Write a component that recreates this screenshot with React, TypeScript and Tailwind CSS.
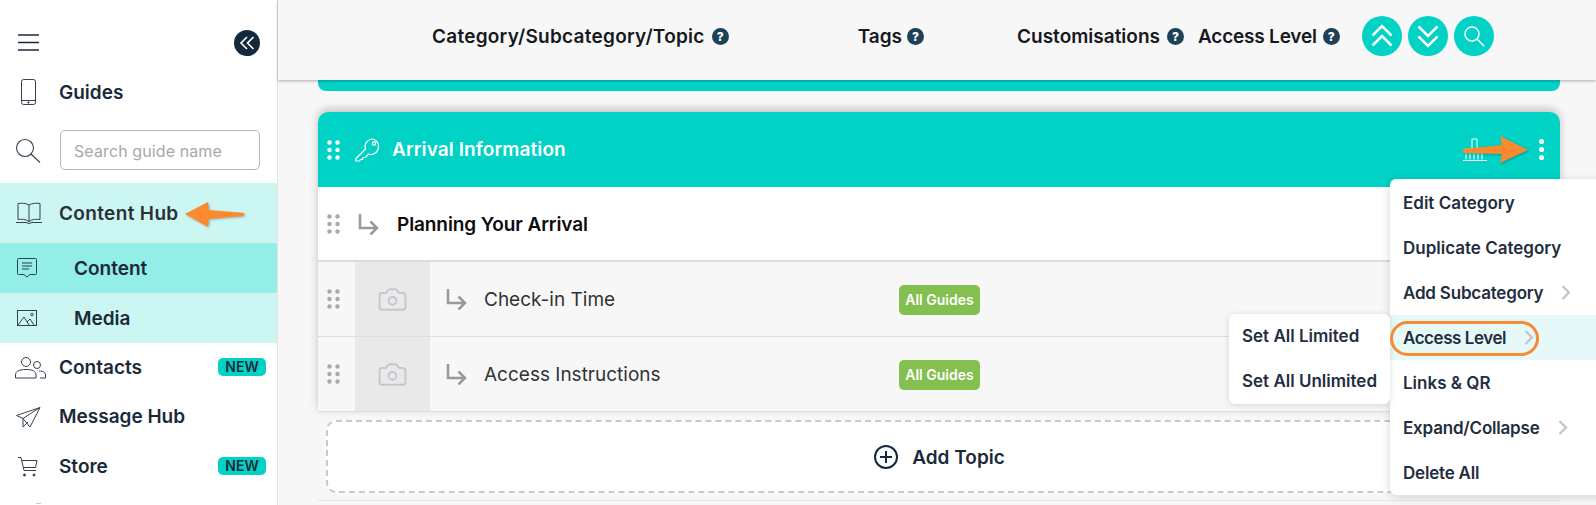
import { Camera } from 'lucide-react';

function Dots({ className }: { className: string }) {
  return (
    <svg width="13" height="20" viewBox="0 0 13 20" className={className} fill="currentColor">
      <circle cx="2.5" cy="2.5" r="2.2" />
      <circle cx="10.5" cy="2.5" r="2.2" />
      <circle cx="2.5" cy="10" r="2.2" />
      <circle cx="10.5" cy="10" r="2.2" />
      <circle cx="2.5" cy="17.5" r="2.2" />
      <circle cx="10.5" cy="17.5" r="2.2" />
    </svg>
  );
}

function Elbow({ className }: { className: string }) {
  return (
    <svg width="21" height="22" viewBox="0 0 21 22" fill="none" stroke="#999" strokeWidth="2.5" className={className}>
      <path d="M2 1v14h17M12.500 8.500 19 15l-6.500 6.500" />
    </svg>
  );
}

function Help() {
  return (
    <span className="block w-[17px] h-[17px] rounded-full bg-[#1d4258] text-white text-[12px] leading-[17px] font-extrabold text-center shrink-0">
      ?
    </span>
  );
}

function RoundBtn({ children }: { children: React.ReactNode }) {
  return <button className="w-10 h-10 rounded-full bg-[#00d2c6] flex items-center justify-center text-white">{children}</button>;
}

function NavRow({ icon, label, badge }: { icon: React.ReactNode; label: string; badge?: boolean }) {
  return (
    <div className="h-[49.500px] flex items-center relative text-[19px] font-semibold text-[#1b2a3a] shrink-0">
      <div className="w-[59px] pl-[15px] flex items-center shrink-0">{icon}</div>
      <span>{label}</span>
      {badge && (
        <span className="ml-auto mr-[11px] mb-[1px] w-[48px] h-[18px] rounded-[5px] bg-[#00d2c6] text-[14px] leading-[18px] text-center font-semibold text-[#1b2a3a]">
          NEW
        </span>
      )}
    </div>
  );
}

function Topic({ name }: { name: string }) {
  return (
    <div className="h-[75px] flex items-stretch bg-[#f7f7f7] border-b border-[#dedede]">
      <div className="w-[37px] flex items-center pl-[9px] shrink-0">
        <Dots className="text-[#a9a9a9]" />
      </div>
      <div className="w-[75px] bg-[#e9e9e9] flex items-center justify-center shrink-0">
        <Camera size={31} strokeWidth={1.5} className="text-[#c3c8d0]" />
      </div>
      <div className="w-[54px] pl-[16px] flex items-center shrink-0">
        <Elbow className="" />
      </div>
      <div className="w-[415px] pt-[2px] flex items-center text-[19px] text-[#333333] shrink-0">{name}</div>
      <div className="pt-[2px] flex items-center">
        <span className="w-[81px] h-[30px] rounded-[5px] bg-[#84c04f] text-white text-[14px] leading-[30px] text-center font-semibold">
          All Guides
        </span>
      </div>
    </div>
  );
}

function MenuRow({ label, chevron, active, tight }: { label: string; chevron?: number; active?: boolean; tight?: string }) {
  return (
    <div className={`h-[45px] flex items-center pl-[13px] text-[17px] font-semibold text-[#1f2e40] ${active ? 'bg-[#e6f8f7]' : ''}`}>
      <span className={`pt-[2px] ${tight ?? ''}`}>{label}</span>
      {chevron !== undefined && (
        <svg width="10" height="15" viewBox="0 0 10 15" fill="none" stroke="#c4c4c4" strokeWidth="2.2" style={{ marginLeft: chevron }}>
          <path d="M1.500 1 8 7.500 1.500 14" />
        </svg>
      )}
    </div>
  );
}

export default function App() {
  return (
    <div className="relative flex w-full h-[505px] overflow-hidden bg-[#f7f7f7] font-['Inter',sans-serif]">
      {/* Sidebar */}
      <aside className="w-[278px] shrink-0 bg-white border-r border-[#e3e3e3] flex flex-col">
        <div className="h-[68px] pt-[30px] pl-[18px] pr-[17px] flex justify-between items-start shrink-0">
          <svg width="21" height="20" viewBox="0 0 21 20" stroke="#1b2a3a" strokeWidth="1.400" className="mt-[3px]">
            <path d="M0 2h21M0 9.500h21M0 17h21" />
          </svg>
          <div className="w-[26px] h-[26px] rounded-full bg-[#14293b] flex items-center justify-center">
            <svg width="16" height="14" viewBox="0 0 16 14" fill="none" stroke="#fff" strokeWidth="1.600">
              <path d="M8 1 2 7l6 6M14.500 1l-6 6 6 6" />
            </svg>
          </div>
        </div>
        <div className="h-[48px] flex items-center text-[19px] font-semibold text-[#1b2a3a] shrink-0">
          <div className="w-[59px] pl-[21px]">
            <svg width="15" height="26" viewBox="0 0 15 26" fill="none" stroke="#33414f" strokeWidth="1">
              <rect x="0.500" y="0.500" width="14" height="25" rx="2" />
              <path d="M0.500 21.500h14" />
              <circle cx="7.500" cy="23.500" r="0.700" fill="#33414f" />
            </svg>
          </div>
          <span className="pt-[2px]">Guides</span>
        </div>
        <div className="h-[67px] flex items-start pt-[14px] shrink-0">
          <div className="w-[60px] pl-[15px] pt-[8px]">
            <svg width="26" height="25" viewBox="0 0 26 25" fill="none" stroke="#33414f" strokeWidth="1.100">
              <circle cx="10" cy="10" r="8.500" />
              <path d="m16 16 9 8.500" />
            </svg>
          </div>
          <div className="w-[200px] h-[40px] rounded-[5px] border border-[#b5b5b5] pl-[13px] pt-[1px] flex items-center text-[16px] tracking-[0.1px] text-[#a8a8a8]">
            Search guide name
          </div>
        </div>
        <div className="h-[60px] bg-[#ccf6f2] flex items-center text-[19px] tracking-[0.35px] font-semibold text-[#2b2f36] shrink-0">
          <div className="w-[59px] pl-[16px]">
            <svg width="26" height="22" viewBox="0 0 26 22" fill="none" stroke="#33414f" strokeWidth="1">
              <path d="M13 20V3C10 1 5 1 2 1.500v16c3-.5 8-.5 11 2 3-2.500 8-2.500 11-2v-16C21 1 16 1 13 3M0 20.500h10l3 1 3-1h10" />
            </svg>
          </div>
          <span className="pt-[2px]">Content Hub</span>
        </div>
        <div className="h-[50px] bg-[#92eee6] flex items-center text-[19px] font-semibold text-[#1b2a3a] shrink-0">
          <div className="w-[74px] pl-[17px]">
            <svg width="20" height="20" viewBox="0 0 20 20" fill="none" stroke="#33414f" strokeWidth="1">
              <path d="M1.500.500h17a1 1 0 0 1 1 1v14a1 1 0 0 1-1 1H13L10 19l-3-2.500H1.500a1 1 0 0 1-1-1v-14a1 1 0 0 1 1-1zM5 5h10M5 8h10M5 11h7" />
            </svg>
          </div>
          <span className="pt-[2px]">Content</span>
        </div>
        <div className="h-[50px] bg-[#ccf6f2] flex items-center text-[19px] font-semibold text-[#1b2a3a] shrink-0">
          <div className="w-[74px] pl-[17px]">
            <svg width="20" height="16" viewBox="0 0 20 16" fill="none" stroke="#33414f" strokeWidth="1">
              <rect x="0.500" y="0.500" width="19" height="15" />
              <path d="m1 15 6-8 5 8M10 12l3-3 4 6" />
              <circle cx="15" cy="4.500" r="1.300" />
            </svg>
          </div>
          <span className="pt-[2px]">Media</span>
        </div>
        <NavRow
          label="Contacts"
          badge
          icon={
            <svg width="31" height="22" viewBox="0 0 31 22" fill="none" stroke="#33414f" strokeWidth="1">
              <circle cx="11" cy="5" r="4.500" />
              <circle cx="22" cy="8" r="3.500" />
              <path d="M.500 21v-3c0-4 4-5.500 10.500-5.500s10 1.500 10 5.500v3zM24 14c4 0 6.500 1 6.500 4v3H25" />
            </svg>
          }
        />
        <NavRow
          label="Message Hub"
          icon={
            <svg width="25" height="21" viewBox="0 0 25 21" fill="none" stroke="#33414f" strokeWidth="1" className="ml-[1px]">
              <path d="M24 .500.500 8.500l6.500 3L24 .500 14 20l-7-8.500V20l5-5" />
            </svg>
          }
        />
        <NavRow
          label="Store"
          badge
          icon={
            <svg width="20" height="20" viewBox="0 0 20 20" fill="none" stroke="#33414f" strokeWidth="1" className="ml-[3px]">
              <path d="M0 .500h3l3 13h12M4 3.500h15l-1.500 7H5.500" />
              <circle cx="6.500" cy="18" r="1" fill="#33414f" />
              <circle cx="16" cy="18" r="1" fill="#33414f" />
            </svg>
          }
        />
        {/* top of the next item's icon, cut off by the window */}
        <div className="pt-[11px] pl-[36px] shrink-0">
          <div className="w-[5px] h-px bg-[#c9ccd0]" />
        </div>
      </aside>

      {/* Main column */}
      <main className="relative flex-1 min-w-0 flex flex-col">
        <header className="relative z-10 h-[80px] shrink-0 bg-[#f7f7f7] shadow-[0_1px_3px_rgba(0,0,0,0.3)] flex items-center pb-[8px] pl-[154px] text-[19px] font-semibold text-[#15191e]">
          <span className="pt-[2px] tracking-[0.25px]">Category/Subcategory/Topic</span>
          <span className="ml-[7px]"><Help /></span>
          <span className="pt-[2px] ml-[129px]">Tags</span>
          <span className="ml-[5px]"><Help /></span>
          <span className="pt-[2px] ml-[93px]">Customisations</span>
          <span className="ml-[7px]"><Help /></span>
          <span className="pt-[2px] ml-[14px] tracking-[-0.2px]">Access Level</span>
          <span className="ml-[6px]"><Help /></span>
          <div className="ml-[22px] flex gap-[6px]">
            <RoundBtn>
              <svg width="26" height="26" viewBox="0 0 26 26" fill="none" stroke="#fff" strokeWidth="2.500">
                <path d="M3.500 12.500 13 3l9.500 9.500M3.500 22.500 13 13l9.500 9.500" />
              </svg>
            </RoundBtn>
            <RoundBtn>
              <svg width="26" height="26" viewBox="0 0 26 26" fill="none" stroke="#fff" strokeWidth="2.500">
                <path d="M3.500 3.500 13 13l9.500-9.500M3.500 13.500 13 23l9.500-9.500" />
              </svg>
            </RoundBtn>
            <RoundBtn>
              <svg width="24" height="24" viewBox="0 0 24 24" fill="none" stroke="#fff" strokeWidth="1.500">
                <circle cx="10" cy="10" r="7" />
                <path d="m15 15 7 7" />
              </svg>
            </RoundBtn>
          </div>
        </header>

        <div className="pl-[40px] pr-[36px] flex flex-col">
          <div className="h-[11px] bg-[#00d2c6] rounded-b-[8px]" />
          <div className="mt-[21px] rounded-t-[10px] shadow-[0_-3px_8px_rgba(0,0,0,0.22)]">
            <div className="h-[75px] rounded-t-[10px] bg-[#00d2c6] flex items-center pl-[9px] text-white">
              <Dots className="text-white" />
              <svg width="27" height="25" viewBox="0 0 27 25" fill="none" stroke="#fff" strokeWidth="1.200" className="ml-[15px]">
                <path d="M10.500 12 1 21.500V24h3.500l1-1.500h2l.500-2h2.500l3-3.500c5 2 10-2 10-7.500S18 .500 14 3c-4 2.500-4.500 6-3.500 9z" />
                <circle cx="19" cy="6.500" r="1.600" />
              </svg>
              <span className="ml-[10px] pt-[2px] text-[19px] tracking-[0.1px] font-semibold">Arrival Information</span>
              <svg width="24" height="23" viewBox="0 0 24 23" fill="none" stroke="#fff" strokeWidth="1" className="ml-auto mr-[8px]">
                <path d="M9 12V1h5v11M3 21.500V10M7 21.500V10M11 21.500V10M15 21.500V10M19 21.500V10M0 22.500h24" />
              </svg>
              <div className="ml-[44px] mr-[16px] flex flex-col gap-[3px]">
                <span className="w-[5px] h-[5px] rounded-full bg-white" />
                <span className="w-[5px] h-[5px] rounded-full bg-white" />
                <span className="w-[5px] h-[5px] rounded-full bg-white" />
              </div>
            </div>
            <div className="h-[75px] bg-white border-b-2 border-[#dcdcdc] flex items-center pl-[9px]">
              <Dots className="text-[#a9a9a9]" />
              <Elbow className="ml-[18px]" />
              <span className="ml-[18px] pt-[3px] text-[19px] tracking-[-0.1px] font-semibold text-[#0c0c0c]">Planning Your Arrival</span>
            </div>
            <Topic name="Check-in Time" />
            <Topic name="Access Instructions" />
          </div>
          <div className="mt-[8px] ml-[8px] mr-[7px] h-[73px] bg-white rounded-[10px] border-2 border-dashed border-[#c9c9c9] flex items-center justify-center gap-[14px] text-[19px] font-semibold text-[#1b2a3a]">
            <svg width="24" height="24" viewBox="0 0 24 24" fill="none" stroke="#14293b" strokeWidth="2">
              <circle cx="12" cy="12" r="11" />
              <path d="M12 6v12M6 12h12" />
            </svg>
            <span className="pt-[3px]">Add Topic</span>
          </div>
          <div className="mt-[7px] border-t border-[#e4e8ee]" />
        </div>
      </main>

      {/* Context menu */}
      <div className="absolute z-20 left-[1390px] top-[179px] w-[220px] h-[316px] pt-[1px] bg-white rounded-[6px] shadow-[0_2px_10px_rgba(0,0,0,0.16)]">
        <MenuRow label="Edit Category" />
        <MenuRow label="Duplicate Category" />
        <MenuRow label="Add Subcategory" chevron={18} tight="tracking-[-0.2px]" />
        <MenuRow label="Access Level" chevron={18} active tight="tracking-[-0.45px]" />
        <MenuRow label="Links & QR" />
        <MenuRow label="Expand/Collapse" chevron={18} tight="tracking-[-0.2px]" />
        <MenuRow label="Delete All" tight="tracking-[-0.2px]" />
      </div>
      <div className="absolute z-20 left-[1229px] top-[314px] w-[161px] h-[90px] bg-white rounded-[6px] shadow-[0_1px_6px_rgba(0,0,0,0.14)] flex flex-col gap-px text-[17px] font-semibold text-[#1f2e40]">
        <div className="h-[44px] pl-[13px] pt-[2px] flex items-center">Set All Limited</div>
        <div className="h-[44px] pl-[13px] pt-[2px] flex items-center">Set All Unlimited</div>
      </div>

      {/* Annotations */}
      <div className="absolute z-30 left-[1390px] top-[321px] w-[149px] h-[35px] rounded-full border-[3px] border-[#f68b33]" />
      <svg width="60" height="28" viewBox="0 0 60 28" className="absolute z-30 left-[185px] top-[201px] drop-shadow-[1px_1px_1px_rgba(0,0,0,0.25)]" fill="#fb8a2e">
        <path d="M0 13 23 1l1 8 35 3v3l-35 3-1 8z" />
      </svg>
      <svg width="68" height="30" viewBox="0 0 68 30" className="absolute z-30 left-[1461px] top-[135px] drop-shadow-[1px_1px_1px_rgba(0,0,0,0.25)]" fill="#fb8a2e">
        <path d="M67 15 39 1l2 9-39 4v4l39 1-2 9z" />
      </svg>
    </div>
  );
}
